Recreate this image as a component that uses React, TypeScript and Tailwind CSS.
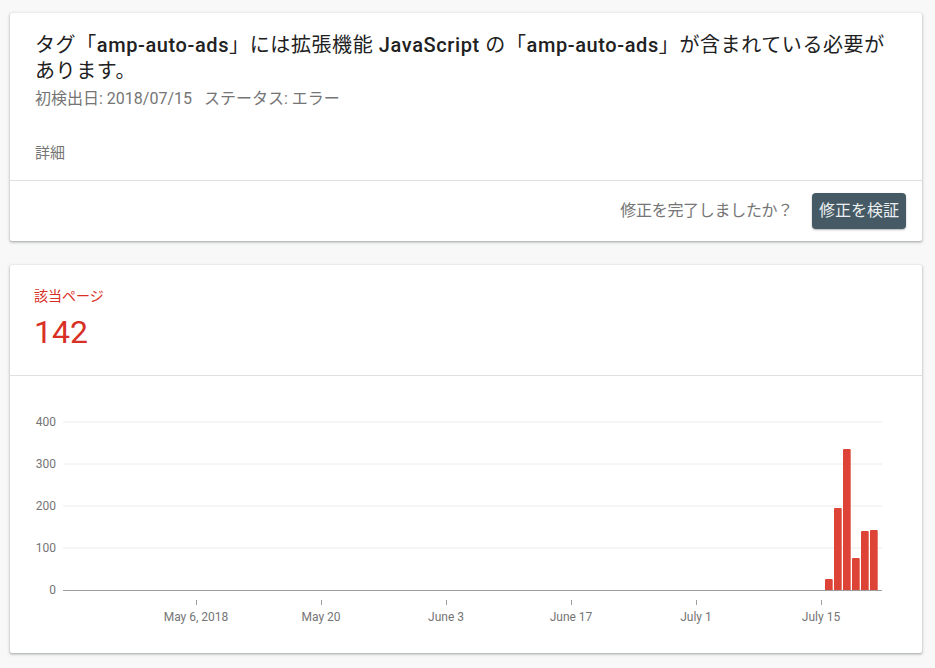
import React from "react";

const font = { fontFamily: "Roboto, 'Noto Sans CJK JP', sans-serif" };

const yTicks = [
  { label: "400", y: 46 },
  { label: "300", y: 88 },
  { label: "200", y: 130 },
  { label: "100", y: 172 },
];

const xTicks = [
  { label: "May 6, 2018", x: 186 },
  { label: "May 20", x: 311 },
  { label: "June 3", x: 436 },
  { label: "June 17", x: 561 },
  { label: "July 1", x: 686 },
  { label: "July 15", x: 811 },
];

const bars = [
  { x: 815, top: 203 },
  { x: 824, top: 132 },
  { x: 833, top: 73 },
  { x: 842, top: 182 },
  { x: 851, top: 155 },
  { x: 860, top: 154 },
];

function Chart() {
  return (
    <svg width="912" height="277" viewBox="0 0 912 277" className="block">
      {yTicks.map((t) => (
        <g key={t.label}>
          <line x1="53" x2="872" y1={t.y} y2={t.y} stroke="#ececec" strokeWidth="1" />
          <text x="46" y={t.y + 4} textAnchor="end" fontSize="12" fill="#757575" style={font}>
            {t.label}
          </text>
        </g>
      ))}
      <text x="46" y={218} textAnchor="end" fontSize="12" fill="#757575" style={font}>
        0
      </text>
      {bars.map((b, i) => (
        <path
          key={i}
          d={`M${b.x} 214 V${b.top + 1} Q${b.x} ${b.top} ${b.x + 1} ${b.top} H${b.x + 6.7} Q${b.x + 7.7} ${b.top} ${b.x + 7.7} ${b.top + 1} V214 Z`}
          fill="#dd4437"
        />
      ))}
      <line x1="53" x2="872" y1="214.5" y2="214.5" stroke="#9e9e9e" strokeWidth="1" />
      {xTicks.map((t) => (
        <g key={t.label}>
          <line x1={t.x + 0.5} x2={t.x + 0.5} y1="224" y2="229" stroke="#9e9e9e" strokeWidth="1" />
          <text x={t.x} y={245} textAnchor="middle" fontSize="12" fill="#757575" style={font}>
            {t.label}
          </text>
        </g>
      ))}
    </svg>
  );
}

export default function App() {
  const card =
    "bg-white rounded-[2px] shadow-[0_1px_2px_0_rgba(60,64,67,0.3),0_1px_3px_1px_rgba(60,64,67,0.15)]";
  return (
    <div className="min-h-[668px] bg-[#f8f8f8] pt-[13px] pl-[10px] pr-[13px] pb-[14px]" style={font}>
      <div className={card}>
        <div className="pl-[25px] pr-[16px] pt-[19px] pb-[17px]">
          <div className="text-[20px] leading-[26px] text-[#212121] tracking-[0.6px] whitespace-nowrap">
            タグ「<span className="font-medium">amp-auto-ads</span>」には拡張機能{" "}
            <span className="font-medium">JavaScript</span> の「
            <span className="font-medium">amp-auto-ads</span>」が含まれている必要が
            <br />
            あります。
          </div>
          <div className="mt-[5px] text-[16px] leading-[20px] text-[#757575]">
            初検出日: 2018/07/15&nbsp;&nbsp;&nbsp;ステータス: エラー
          </div>
          <div className="mt-[34px] text-[15px] leading-[20px] text-[#757575]">詳細</div>
        </div>
        <div className="border-t border-[#e0e0e0] h-[61px] flex items-center justify-end pr-[16px] gap-[19px]">
          <span className="text-[16px] text-[#757575] tracking-[-0.3px]">修正を完了しましたか？</span>
          <button className="h-[36px] w-[94px] rounded-[4px] bg-[#455a64] text-[16px] text-[#eceff1] shadow-[0_1px_2px_rgba(0,0,0,0.3)]">
            修正を検証
          </button>
        </div>
      </div>

      <div className={`${card} mt-[24px]`}>
        <div className="pl-[24px] pt-[22px] pb-[23px]">
          <div className="text-[14px] leading-[18px] text-[#d93025]">該当ページ</div>
          <div className="mt-[7px] text-[32px] leading-[40px] text-[#d93025]">142</div>
        </div>
        <div className="border-t border-[#e0e0e0]">
          <Chart />
        </div>
      </div>
    </div>
  );
}
